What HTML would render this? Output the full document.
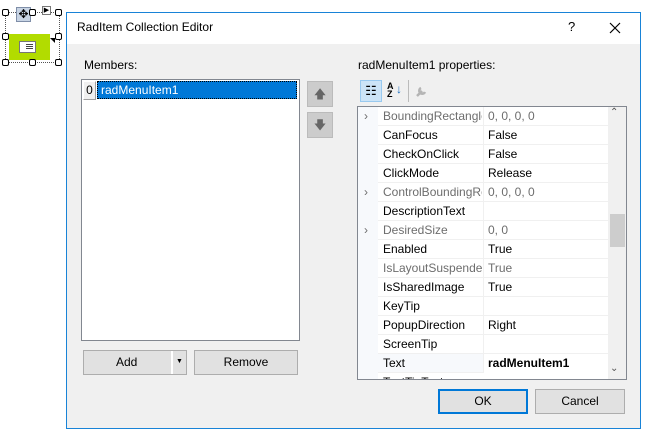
<!DOCTYPE html>
<html><head><style>
*{margin:0;padding:0;box-sizing:border-box}
body{width:655px;height:445px;background:#fff;position:relative;overflow:hidden;font-family:"Liberation Sans",sans-serif;font-size:12px;color:#000}
.a{position:absolute}
.dlg{left:66px;top:12px;width:575px;height:417px;border:1px solid #1883d7;background:#f0f0f0}
.tb{left:0;top:0;width:573px;height:31px;background:#fff}
.btn{position:absolute;background:#e1e1e1;border:1px solid #adadad;text-align:center;line-height:22px;font-size:12px}
.row{position:absolute;left:20px;width:230px;height:19px;border-bottom:1px solid #f0f0f0;line-height:18px}
.row .n{position:absolute;left:5px;width:99px;overflow:hidden;white-space:nowrap}
.row .v{position:absolute;left:105px;width:125px;padding-left:4px;border-left:1px solid #f0f0f0;height:19px}
.g{color:#6d6d6d}
.h{width:7px;height:7px;border:1px solid #000;background:#fff;position:absolute;border-radius:2px}
</style></head><body>
<div class="a" style="left:5px;top:12px;width:55px;height:51px;border:1px dotted #555"></div>
<div class="a" style="left:16px;top:7px;width:15px;height:15px;background:#c8d4e4;border:1px solid #7f8ea8;font-size:12px;line-height:12px;text-align:center">✥</div>
<div class="a" style="left:42px;top:6px;width:9px;height:9px;border:1px solid #777;background:#fff;font-size:7px;line-height:7px;text-align:center">▶</div>
<div class="a" style="left:9px;top:34px;width:41px;height:26px;background:#b2dc00"></div>
<div class="a" style="left:19px;top:41px;width:17px;height:12px;background:#fff;border:1px solid #777"></div>
<div class="a" style="left:26px;top:44px;width:7px;height:1px;background:#444;box-shadow:0 2px #444,0 4px #444"></div>
<div class="a" style="left:50px;top:38px;width:0;height:0;border-left:5px solid transparent;border-top:5px solid #000"></div>
<div class="h" style="left:2px;top:9px"></div><div class="h" style="left:29px;top:9px"></div><div class="h" style="left:55px;top:9px"></div>
<div class="h" style="left:2px;top:33px"></div><div class="h" style="left:55px;top:33px"></div>
<div class="h" style="left:2px;top:59px"></div><div class="h" style="left:29px;top:59px"></div><div class="h" style="left:55px;top:59px"></div>

<div class="a dlg">
 <div class="a tb"></div>
 <div class="a" style="left:10px;top:7px;font-size:12px">RadItem Collection Editor</div>
 <div class="a" style="left:501px;top:6px;font-size:13px">?</div>
 <svg class="a" style="left:542px;top:9px" width="12" height="12"><path d="M1 1L11 11M11 1L1 11" stroke="#000" stroke-width="1.2"/></svg>
 <div class="a" style="left:17px;top:45px">Members:</div>
 <div class="a" style="left:14px;top:66px;width:219px;height:262px;background:#fff;border:1px solid #828790"></div>
 <div class="a" style="left:16px;top:68px;width:13px;height:19px;background:#f0f0f0;border:1px solid #a0a0a0;border-top-color:#fff;border-left-color:#fff;text-align:center;line-height:17px">0</div>
 <div class="a" style="left:30px;top:68px;width:200px;height:18px;background:#0078d7;color:#fff;border:1px dotted #000;padding-left:3px;line-height:16px">radMenuItem1</div>
 <div class="a" style="left:240px;top:68px;width:26px;height:26px;background:#ccc;border:1px solid #bbb;color:#666;text-align:center;line-height:24px;font-size:12px">🡅</div>
 <div class="a" style="left:240px;top:99px;width:26px;height:26px;background:#ccc;border:1px solid #bbb;color:#666;text-align:center;line-height:24px;font-size:12px">🡇</div>
 <div class="btn" style="left:16px;top:337px;width:104px;height:25px;text-align:left;padding-left:32px">Add<span style="position:absolute;left:87px;top:0;width:2px;height:23px;background:#fff"></span><span style="position:absolute;left:92px;top:0;font-size:7px">▼</span></div>
 <div class="btn" style="left:127px;top:337px;width:104px;height:25px">Remove</div>
 <div class="a" style="left:291px;top:45px">radMenuItem1 properties:</div>
 <div class="a" style="left:293px;top:67px;width:22px;height:22px;background:#cce4f7;border:1px solid #99c9ef;font-size:13px;text-align:center;line-height:20px">☷</div>
 <div class="a" style="left:320px;top:69px;font-size:9px;font-weight:bold;line-height:8px">A<br>Z</div>
 <div class="a" style="left:329px;top:69px;color:#1e6fc0;font-weight:bold">↓</div>
 <div class="a" style="left:341px;top:67px;width:1px;height:22px;background:#bbb"></div>
 <svg class="a" style="left:348px;top:71px" width="14" height="14"><path d="M2 12L7 7M6 4a3 3 0 1 0 4 4" stroke="#b5b5b5" stroke-width="2.5" fill="none"/></svg>
 <div class="a" style="left:290px;top:93px;width:270px;height:274px;background:#fff;border:1px solid #828790;overflow:hidden">
  <div class="a" style="left:0;top:0;width:20px;height:272px;background:#f7f9fc"></div>
  <div class="row" style="top:0"><div class="n g">BoundingRectangle</div><div class="v g">0, 0, 0, 0</div></div>
  <div class="a g" style="left:6px;top:2px">›</div>
  <div class="row" style="top:19px"><div class="n">CanFocus</div><div class="v">False</div></div>
  <div class="row" style="top:38px"><div class="n">CheckOnClick</div><div class="v">False</div></div>
  <div class="row" style="top:57px"><div class="n">ClickMode</div><div class="v">Release</div></div>
  <div class="row" style="top:76px"><div class="n g">ControlBoundingRect</div><div class="v g">0, 0, 0, 0</div></div>
  <div class="a g" style="left:6px;top:78px">›</div>
  <div class="row" style="top:95px"><div class="n">DescriptionText</div><div class="v"></div></div>
  <div class="row" style="top:114px"><div class="n g">DesiredSize</div><div class="v g">0, 0</div></div>
  <div class="a g" style="left:6px;top:116px">›</div>
  <div class="row" style="top:133px"><div class="n">Enabled</div><div class="v">True</div></div>
  <div class="row" style="top:152px"><div class="n g">IsLayoutSuspended</div><div class="v g">True</div></div>
  <div class="row" style="top:171px"><div class="n">IsSharedImage</div><div class="v">True</div></div>
  <div class="row" style="top:190px"><div class="n">KeyTip</div><div class="v"></div></div>
  <div class="row" style="top:209px"><div class="n">PopupDirection</div><div class="v">Right</div></div>
  <div class="row" style="top:228px"><div class="n">ScreenTip</div><div class="v"></div></div>
  <div class="row" style="top:247px;background:#f7f9fc"><div class="n">Text</div><div class="v" style="font-weight:bold;background:#fff">radMenuItem1</div></div>
  <div class="row" style="top:266px"><div class="n">TextTipText</div></div>
  <div class="a" style="left:250px;top:0;width:18px;height:272px;background:#f0f0f0"></div>
  <div class="a" style="left:252px;top:0;font-size:10px;color:#555">⌃</div>
  <div class="a" style="left:252px;top:107px;width:15px;height:33px;background:#cdcdcd"></div>
  <div class="a" style="left:252px;top:256px;font-size:10px;color:#555">⌄</div>
 </div>
 <div class="btn" style="left:371px;top:376px;width:90px;height:25px;border:2px solid #0078d7;line-height:21px">OK</div>
 <div class="btn" style="left:468px;top:376px;width:90px;height:25px">Cancel</div>
</div>
</body></html>
